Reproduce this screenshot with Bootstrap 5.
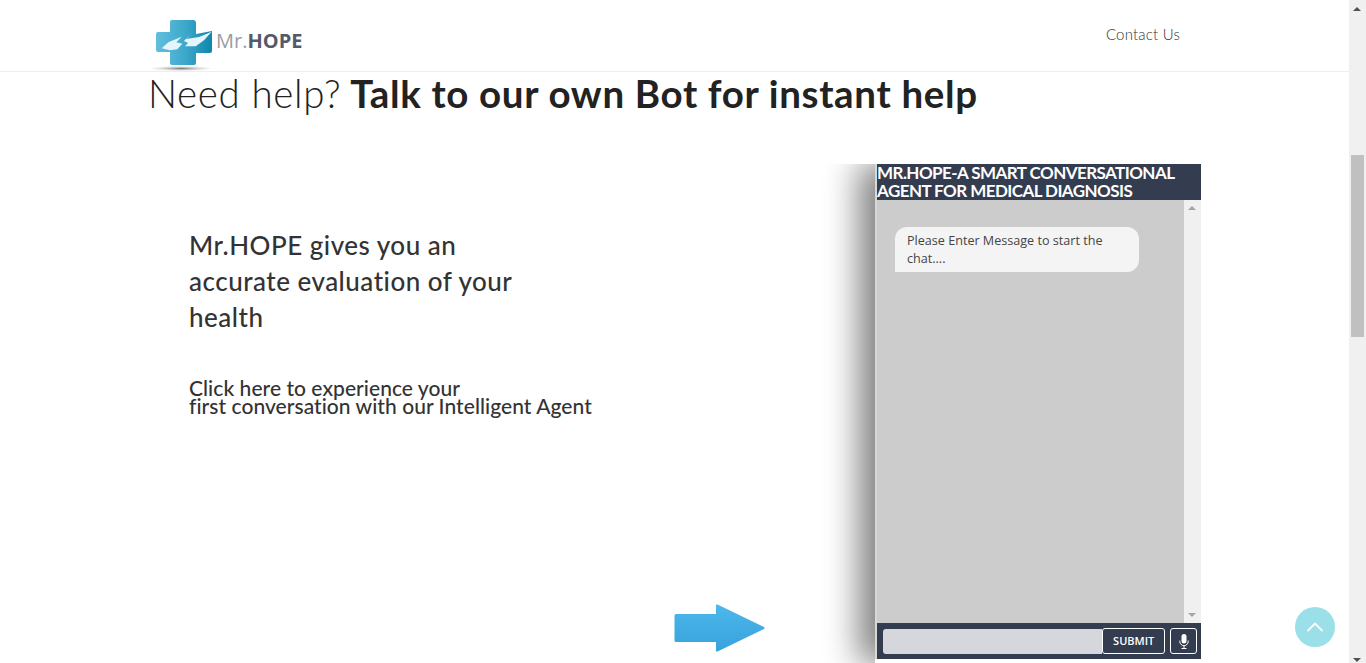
<!DOCTYPE html>
<html lang="en">
<head>
<meta charset="UTF-8" />
<meta name="viewport" content="width=device-width, initial-scale=1" />
<title>Mr.HOPE</title>
<link href="https://cdn.jsdelivr.net/npm/bootstrap@5.3.0/dist/css/bootstrap.min.css" rel="stylesheet" />
<style>
html, body { height: 663px; overflow: hidden; }
body { font-family: Lato, "Liberation Sans", sans-serif; color: #222; background: #fff; }
.page-wrap { width: 1349px; height: 663px; overflow: hidden; }
.top-bar { height: 72px; border-bottom: 1px solid #eee; padding: 0 169px 0 151px; }
.logo-wrap { margin-top: 17px; height: 55px; }
.logo-text { font-family: "Open Sans", sans-serif; font-size: 20px; line-height: 27px; color: #9a9da3; margin: 10px 0 0 2px; }
.logo-text b { color: #555a6b; font-weight: 700; }
.contact-link { color: #333; font-size: 15px; font-weight: 300; margin-top: 24px; text-decoration: none; line-height: 20px; letter-spacing: .2px; }
.content-box { margin: 0 148px; }
.main-title { font-size: 38.5px; line-height: 46px; font-weight: 300; margin: -2px 0 0; color: #222; letter-spacing: .65px; }
.main-title b { font-weight: 700; margin-left: -2px; }
.main-row { margin-top: 48px; height: 499px; }
.left-col { width: 727px; }
.intro-box { padding: 63px 0 0 41px; color: #333; }
.intro-title { font-size: 26px; line-height: 36px; font-weight: 500; width: 350px; margin: 0 0 44px; letter-spacing: .5px; }
.intro-sub { font-size: 21px; line-height: 18px; font-weight: 500; margin: 0; letter-spacing: .05px; white-space: nowrap; }
.arrow-icon { margin: 0 109px 11px 0; }
.chat-shell { width: 326px; height: 499px; box-shadow: -16px 0 32px #808080; clip-path: inset(0 0 0 -70px); background: #fff; }
.chat-box { height: 495px; border-left: 2px solid #d8d8d8; background: #ccc; }
.chat-head { height: 36px; background: #343c4f; color: #fff; font-size: 17px; line-height: 18px; font-weight: 700; letter-spacing: -.56px; white-space: nowrap; }
.chat-body { height: 423px; }
.chat-area { padding: 27px 0 0 18px; }
.chat-bubble { width: 244px; height: 45px; background: #f4f4f4; border-radius: 12px 12px 12px 0; padding: 5px 12px; font-family: "Open Sans", sans-serif; font-size: 12.6px; line-height: 18px; color: #444; }
.chat-track { width: 17px; background: #f0f0f0; padding: 6px 4px; }
.chat-foot { height: 36px; background: #343c4f; padding: 5px 4px 5px 6px; }
.chat-input { width: 220px; height: 25px; margin-top: 1px; background: #d5d7dc; border: 0; border-radius: 3px 0 0 3px; }
.btn-submit { width: 63px; height: 26px; border: 1px solid #fff; border-radius: 3px; background: #343c4f; color: #fff; font-family: "Open Sans", sans-serif; font-size: 11px; font-weight: 600; padding: 0; }
.btn-mic { width: 27px; height: 26px; margin-left: 5px; border: 1px solid #fff; border-radius: 3px; background: #343c4f; padding: 0; }
.page-scroll { position: fixed; top: 0; right: 0; width: 17px; height: 663px; background: #f0f0f0; }
.page-thumb { position: absolute; top: 155px; left: 2px; width: 13px; height: 182px; background: #c0c0c0; }
.tri-up { width: 0; height: 0; border: 4px solid transparent; border-top: 0; border-bottom: 4px solid #a3a3a3; }
.tri-down { width: 0; height: 0; border: 4px solid transparent; border-bottom: 0; border-top: 4px solid #a3a3a3; }
.page-scroll .tri-up { position: absolute; top: 7px; left: 4px; border-bottom-color: #505050; }
.page-scroll .tri-down { position: absolute; bottom: 1px; left: 4px; border-top-color: #505050; }
.to-top { position: fixed; left: 1295px; top: 607px; width: 40px; height: 40px; border-radius: 50%; background: #9bdfe8; }
</style>
</head>
<body>
<div class="page-wrap">
	<div class="top-bar d-flex justify-content-between">
		<div class="logo-wrap d-flex">
			<svg width="63" height="55" viewBox="0 0 63 55">
				<defs>
					<linearGradient id="crossFill" x1="0" y1="0" x2="1" y2="0">
						<stop offset="0" stop-color="#62bfdd" />
						<stop offset=".5" stop-color="#3fa9cc" />
						<stop offset="1" stop-color="#0f86ad" />
					</linearGradient>
					<radialGradient id="groundFill">
						<stop offset="0" stop-color="#777" />
						<stop offset="1" stop-color="#ddd" stop-opacity=".2" />
					</radialGradient>
				</defs>
				<ellipse cx="30" cy="51.500" rx="30" ry="2.500" fill="url(#groundFill)" />
				<path d="M19 5q0-2 2-2h21q3 0 3 3v11l16-3v20q0 2-2 2H45v10q0 2-2 2H21q-2 0-2-2V35H7q-2 0-2-2V17q0-2 2-2h12z" fill="url(#crossFill)" />
				<path d="M10.700 31.300l6.600-6L30.700 19.700l-5.400 5.600 6 1.400-5 5.600-7.600 1z" fill="#e6f5fa" />
				<path d="M40.700 16l-5.400 6L48 20l12.700-5.300L53 23.300l-8.300 6H34l3-3.300-4-2z" fill="#e6f5fa" />
			</svg>
			<div class="logo-text">Mr.<b>HOPE</b></div>
		</div>
		<a class="contact-link" href="#">Contact Us</a>
	</div>

	<div class="content-box">
		<h1 class="main-title">Need help? <b>Talk to our own Bot for instant help</b></h1>
		<div class="main-row d-flex">
			<div class="left-col d-flex justify-content-between">
				<div class="intro-box">
					<p class="intro-title">Mr.HOPE gives you an accurate evaluation of your health</p>
					<p class="intro-sub">Click here to experience your<br />first conversation with our Intelligent Agent</p>
				</div>
				<svg class="arrow-icon align-self-end" width="92" height="48" viewBox="0 0 92 48">
					<defs>
						<linearGradient id="arrowFill" x1="0" y1="0" x2="0" y2="1">
							<stop offset="0" stop-color="#4db8ec" />
							<stop offset="1" stop-color="#37a2dc" />
						</linearGradient>
					</defs>
					<path d="M2 10h40V1.500q0-1.500 1.500-1L90 23q1 1 0 2L43.500 47.500q-1.500.5-1.500-1V38H2q-1.500 0-1.500-1.500v-25Q.5 10 2 10z" fill="url(#arrowFill)" />
				</svg>
			</div>
			<div class="chat-shell">
				<div class="chat-box">
					<div class="chat-head">MR.HOPE-A SMART CONVERSATIONAL<br />AGENT FOR MEDICAL DIAGNOSIS</div>
					<div class="chat-body d-flex">
						<div class="chat-area flex-grow-1">
							<div class="chat-bubble">Please Enter Message to start the chat....</div>
						</div>
						<div class="chat-track d-flex flex-column justify-content-between">
							<div class="tri-up"></div>
							<div class="tri-down"></div>
						</div>
					</div>
					<div class="chat-foot d-flex">
						<input class="chat-input" type="text" />
						<button class="btn-submit" type="button">SUBMIT</button>
						<button class="btn-mic d-flex align-items-center justify-content-center" type="button">
							<svg width="10" height="15" viewBox="0 0 10 15">
								<rect x="2.500" y="0" width="5" height="9.500" rx="2.500" fill="#fff" />
								<path d="M.8 6.500v1a4.200 4.200 0 0 0 8.400 0v-1" fill="none" stroke="#fff" stroke-width="1" />
								<path d="M5 12v2M2.500 14.500h5" stroke="#fff" stroke-width="1" />
							</svg>
						</button>
					</div>
				</div>
			</div>
		</div>
	</div>
</div>

<div class="page-scroll">
	<div class="tri-up"></div>
	<div class="page-thumb"></div>
	<div class="tri-down"></div>
</div>
<div class="to-top d-flex align-items-center justify-content-center">
	<svg width="18" height="10" viewBox="0 0 18 10"><path d="M1.500 9L9 1.500 16.500 9" fill="none" stroke="#fff" stroke-width="1.800" /></svg>
</div>

<script src="https://cdn.jsdelivr.net/npm/bootstrap@5.3.0/dist/js/bootstrap.bundle.min.js"></script>
</body>
</html>
